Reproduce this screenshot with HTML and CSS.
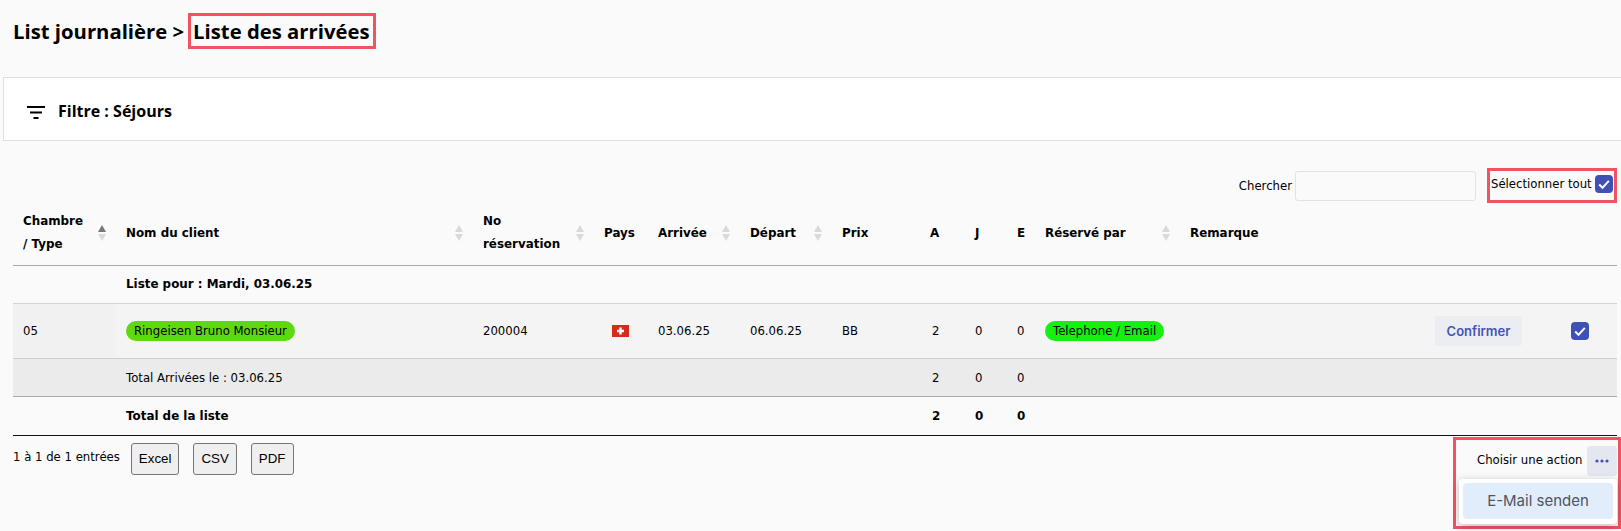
FILE: index.html
```html
<!DOCTYPE html>
<html lang="fr">
<head>
<meta charset="utf-8">
<title>Liste des arrivées</title>
<link rel="stylesheet" href="styles.css">
</head>
<body>
<header class="title-bar">
  <h1 class="title"><span class="crumb">List journalière &gt;</span><span class="crumb-current">Liste des arrivées</span></h1>
</header>
<section class="filter">
  <svg class="filter-icon" viewBox="0 0 18 13" width="18" height="13" aria-hidden="true"><path d="M0 1h18M3 6.500h12M6.500 12h5" stroke="#000" stroke-width="2" fill="none"/></svg>
  <span class="filter-label">Filtre : Séjours</span>
</section>
<main class="content">
  <div class="toolbar">
    <label class="search">Chercher <input class="search-input" type="text"></label>
    <div class="select-all">Sélectionner tout
      <span class="check"><svg viewBox="0 0 18 18" width="18" height="18" aria-hidden="true"><path d="M4.200 9.500l3.300 3.300 6.300-7" stroke="#fff" stroke-width="2" fill="none"/></svg></span>
    </div>
  </div>
  <table class="list">
    <colgroup>
      <col class="c-room"><col class="c-name"><col class="c-res"><col class="c-country"><col class="c-date"><col class="c-date"><col class="c-price"><col class="c-a"><col class="c-j"><col class="c-e"><col class="c-by"><col class="c-note"><col class="c-confirm"><col class="c-check">
    </colgroup>
    <thead>
      <tr>
        <th class="sort sort-active">Chambre<br>/ Type</th>
        <th class="sort">Nom du client</th>
        <th class="sort">No<br>réservation</th>
        <th>Pays</th>
        <th class="sort">Arrivée</th>
        <th class="sort">Départ</th>
        <th>Prix</th>
        <th>A</th>
        <th>J</th>
        <th>E</th>
        <th class="sort">Réservé par</th>
        <th>Remarque</th>
        <th></th>
        <th></th>
      </tr>
    </thead>
    <tbody>
      <tr class="group">
        <td></td><td colspan="13"><b>Liste pour : Mardi, 03.06.25</b></td>
      </tr>
      <tr class="data">
        <td class="sorted">05</td>
        <td><span class="pill pill-lime">Ringeisen Bruno Monsieur</span></td>
        <td>200004</td>
        <td class="flag-cell"><svg class="flag" viewBox="0 0 17 12" width="17" height="12" aria-hidden="true"><rect width="17" height="12" fill="#d52b1e"/><path d="M7.300 2.500h2.400v2.300H12v2.400H9.700v2.300H7.300V7.200H5V4.800h2.300z" fill="#fff"/></svg></td>
        <td>03.06.25</td>
        <td>06.06.25</td>
        <td>BB</td>
        <td class="num-a">2</td>
        <td>0</td>
        <td>0</td>
        <td><span class="pill pill-green">Telephone / Email</span></td>
        <td></td>
        <td class="confirm-cell"><button class="confirm" type="button">Confirmer</button></td>
        <td class="check-cell"><span class="check"><svg viewBox="0 0 18 18" width="18" height="18" aria-hidden="true"><path d="M4.200 9.500l3.300 3.300 6.300-7" stroke="#fff" stroke-width="2" fill="none"/></svg></span></td>
      </tr>
      <tr class="subtotal">
        <td></td><td colspan="6">Total Arrivées le : 03.06.25</td><td class="num-a">2</td><td>0</td><td>0</td><td colspan="4"></td>
      </tr>
    </tbody>
    <tfoot>
      <tr class="total">
        <td></td><td colspan="6">Total de la liste</td><td class="num-a">2</td><td>0</td><td>0</td><td colspan="4"></td>
      </tr>
    </tfoot>
  </table>
  <div class="footer">
    <span class="info">1 à 1 de 1 entrées</span>
    <button class="export" type="button">Excel</button>
    <button class="export" type="button">CSV</button>
    <button class="export" type="button">PDF</button>
    <div class="actions">
      <span class="actions-label">Choisir une action</span>
      <button class="dots" type="button" aria-label="Actions"><svg viewBox="0 0 14 4" width="14" height="4" aria-hidden="true"><circle cx="2" cy="2" r="1.600"/><circle cx="7" cy="2" r="1.600"/><circle cx="12" cy="2" r="1.600"/></svg></button>
      <div class="menu"><div class="menu-item">E-Mail senden</div></div>
    </div>
  </div>
</main>
</body>
</html>
```
FILE: styles.css
```css
* { box-sizing: border-box; }
html, body { height: 100%; }
body {
  margin: 0;
  background: #fafafa;
  color: #000;
  font: 11.7px/16px "DejaVu Sans", Verdana, sans-serif;
  overflow: hidden;
}
.title-bar { padding: 13px 0 28px 13px; height: 77px; }
.title {
  margin: 0;
  display: flex;
  align-items: center;
  font: 700 20.3px/29px "Open Sans", sans-serif;
}
.crumb { margin-right: 4px; padding-top: 1px; }
.crumb-current {
  border: 3px solid #f0545e;
  padding: 1px 3px 0 2px;
}
.filter {
  margin-left: 3px;
  height: 64px;
  background: #fff;
  border: 1px solid #e0e0e0;
  border-right: 0;
  display: flex;
  align-items: center;
  padding: 4px 0 0 23px;
}
.filter-icon { margin-right: 13px; margin-top: 3px; }
.filter-label { font: 700 16px/20px "Open Sans", sans-serif; }
.content { padding: 27px 4px 0 13px; position: relative; }
.toolbar {
  display: flex;
  justify-content: flex-end;
  align-items: flex-start;
  height: 37px;
}
.search {
  display: flex;
  align-items: center;
  gap: 3px;
  margin-top: 3px;
  margin-right: 11px;
}
.search-input {
  width: 181px;
  height: 30px;
  background: #fafafa;
  border: 1px solid #e2e2e2;
  border-radius: 3px;
}
.select-all {
  width: 130px;
  height: 35px;
  border: 3px solid #f0545e;
  display: flex;
  align-items: center;
  justify-content: space-between;
  padding: 0 1px 3px 1px;
}
.check {
  display: block;
  width: 18px;
  height: 18px;
  background: #3f51b5;
  border-radius: 4px;
  flex: none;
}
.check svg { display: block; }
.list {
  width: 1604px;
  table-layout: fixed;
  border-collapse: collapse;
}
.c-room { width: 103px; }
.c-name { width: 357px; }
.c-res { width: 121px; }
.c-country { width: 54px; }
.c-date { width: 92px; }
.c-price { width: 88px; }
.c-a { width: 45px; }
.c-j { width: 42px; }
.c-e { width: 28px; }
.c-by { width: 145px; }
.c-note { width: 240px; }
.c-confirm { width: 140px; }
.c-check { width: 57px; }
th, td { padding: 0 10px; text-align: left; white-space: nowrap; }
thead tr { height: 60px; border-bottom: 1px solid #aaa; }
th { font-weight: 700; font-size: 11.9px; line-height: 23px; position: relative; padding-bottom: 3px; }
.sort::before, .sort::after {
  content: "";
  position: absolute;
  right: 10px;
  border-left: 4px solid transparent;
  border-right: 4px solid transparent;
}
.sort::before { top: 20px; border-bottom: 7px solid #d9d9d9; }
.sort::after { top: 29px; border-top: 7px solid #d9d9d9; }
.sort-active::before { border-bottom-color: #777; }
.group { height: 38px; border-bottom: 1px solid #d4d4d4; font-size: 11.9px; }
.data { height: 55px; background: #f4f4f4; border-bottom: 1px solid #cfcfcf; }
.sorted { background: #f1f1f1; }
.subtotal { height: 38px; background: #ebebeb; border-bottom: 1px solid #aaa; }
.subtotal td { padding-top: 2px; }
.total { height: 39px; font-weight: 700; font-size: 11.9px; border-bottom: 1px solid #111; }
td.num-a { padding-left: 12px; }
.pill {
  display: inline-block;
  height: 20px;
  line-height: 20px;
  padding: 0 8px;
  border-radius: 10px;
}
.pill-lime { background: #5fd90f; }
.pill-green { background: #14f00f; }
.flag { display: block; margin-left: 8px; }
.confirm-cell { padding: 0 0 0 15px; }
.check-cell { padding-left: 11px; }
.confirm {
  width: 87px;
  height: 30px;
  background: #ecedf2;
  border: 0;
  border-radius: 3px;
  color: #4455b5;
  font: 600 13px/16px "Inter", sans-serif;
}
.footer { display: flex; align-items: flex-start; position: relative; }
.info { margin-top: 13px; margin-right: 11px; }
.export {
  margin-top: 7px;
  margin-right: 14px;
  height: 32px;
  padding: 0 7px;
  background: #efefef;
  border: 1px solid #767676;
  border-radius: 3px;
  color: #000;
  font: 13.333px "Liberation Sans", sans-serif;
}
.actions {
  position: absolute;
  right: -4px;
  top: 1px;
  width: 168px;
  height: 92px;
  border: 3px solid #f0545e;
}
.actions-label {
  position: absolute;
  left: 21px;
  top: 12px;
}
.dots {
  position: absolute;
  right: 1px;
  top: 6px;
  width: 30px;
  height: 30px;
  padding: 0;
  background: #e5e7f0;
  border: 0;
  border-radius: 3px;
  fill: #3f51b5;
}
.dots svg { display: block; margin: 0 auto; }
.menu {
  position: absolute;
  left: 3px;
  top: 39px;
  width: 158px;
  height: 45px;
  padding: 4px;
  background: #fff;
  border-radius: 4px;
  box-shadow: 0 2px 8px rgba(0,0,0,.25);
}
.menu-item {
  height: 36px;
  background: #e2edfb;
  border-radius: 4px;
  color: #4b5563;
  text-align: center;
  font: 15px/36px "Inter", sans-serif;
}
```
